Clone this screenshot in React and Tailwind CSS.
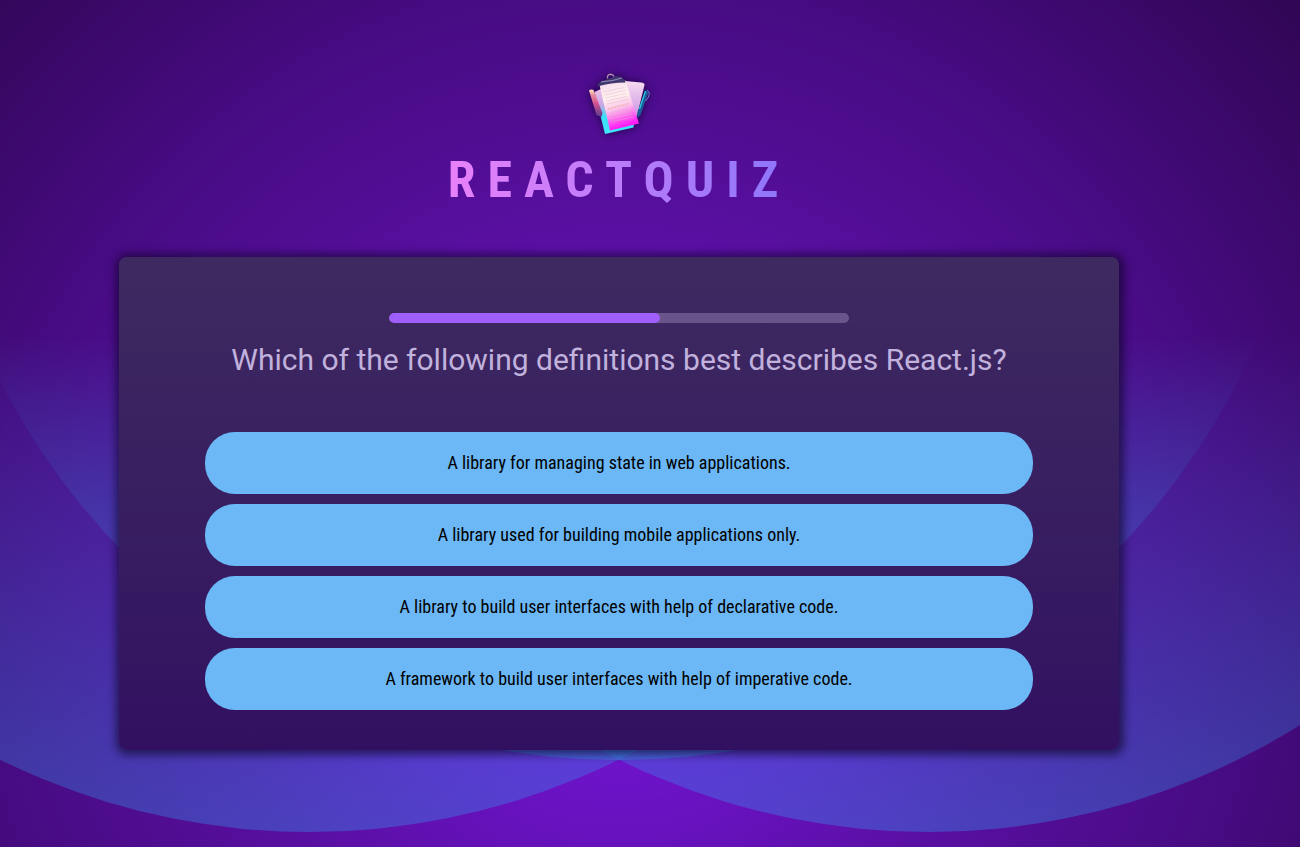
const answers = [
  'A library for managing state in web applications.',
  'A library used for building mobile applications only.',
  'A library to build user interfaces with help of declarative code.',
  'A framework to build user interfaces with help of imperative code.',
];

function Backdrop() {
  return (
    <svg className="absolute inset-0 -z-10 h-full w-full" viewBox="0 0 1300 847" preserveAspectRatio="none" aria-hidden="true">
      <defs>
        <radialGradient id="glow" gradientUnits="userSpaceOnUse" cx="619" cy="615" r="910">
          <stop offset="0" stopColor="#7a15e4" />
          <stop offset="0.43" stopColor="#580fa0" />
          <stop offset="0.7" stopColor="#460b81" />
          <stop offset="1" stopColor="#310655" />
        </radialGradient>
        <linearGradient id="orb" gradientUnits="userSpaceOnUse" x1="0" y1="335" x2="0" y2="760">
          <stop offset="0" stopColor="#2ea0e8" stopOpacity="0" />
          <stop offset="1" stopColor="#2ea0e8" stopOpacity="0.38" />
        </linearGradient>
        <linearGradient id="sideOrb" gradientUnits="userSpaceOnUse" x1="0" y1="335" x2="0" y2="832">
          <stop offset="0" stopColor="#329cf2" stopOpacity="0" />
          <stop offset="1" stopColor="#329cf2" stopOpacity="0.35" />
        </linearGradient>
      </defs>
      <rect width="1300" height="847" fill="url(#glow)" />
      <circle cx="309.5" cy="134" r="698" fill="url(#sideOrb)" />
      <circle cx="928.5" cy="134" r="698" fill="url(#sideOrb)" />
      <circle cx="619" cy="65" r="695" fill="url(#orb)" />
    </svg>
  );
}

function QuizLogo() {
  return (
    <svg className="h-16 w-16 drop-shadow-[0_0_4px_rgba(10,0,40,0.75)]" viewBox="0 0 64 64" aria-hidden="true">
      <defs>
        <linearGradient id="page" x1="0" y1="0" x2="0.25" y2="1">
          <stop offset="0" stopColor="#f3d9ee" />
          <stop offset="0.4" stopColor="#fff0ee" />
          <stop offset="0.62" stopColor="#fcc6ea" />
          <stop offset="0.85" stopColor="#ff5cf0" />
          <stop offset="1" stopColor="#ff1cf5" />
        </linearGradient>
        <linearGradient id="rear" x1="0" y1="0" x2="0" y2="1">
          <stop offset="0" stopColor="#f8dcf0" />
          <stop offset="1" stopColor="#c58be4" />
        </linearGradient>
        <linearGradient id="board" x1="0" y1="0" x2="0" y2="1">
          <stop offset="0" stopColor="#eebfe8" />
          <stop offset="0.35" stopColor="#c9a6e6" />
          <stop offset="0.6" stopColor="#3ee0f5" />
          <stop offset="1" stopColor="#3ee8fa" />
        </linearGradient>
        <linearGradient id="pencil" x1="0" y1="0" x2="0" y2="1">
          <stop offset="0" stopColor="#ffe0c0" />
          <stop offset="0.2" stopColor="#e88a9c" />
          <stop offset="0.5" stopColor="#d4548f" />
          <stop offset="1" stopColor="#593b91" />
        </linearGradient>
      </defs>
      <path d="M38 9 L54 10.5 Q58 11 57.5 13 L50 44 L40 48Z" fill="url(#rear)" />
      <path d="M7.5 20 L14 17 L47 50 L46.5 55.5 L18 62Z" fill="url(#board)" />
      <path d="M2 18.5 Q4 17 6.5 18 L15.5 41 L14.5 45 L9.5 43Z" fill="url(#pencil)" />
      <path d="M58.5 18.5 L61.5 20 L53.5 43 L50.5 46 L50.5 40Z" fill="#1d5c9c" />
      <path d="M58.5 19 L52.5 37" stroke="#28cadd" strokeWidth="1.3" fill="none" />
      <path d="M60 18 Q63.5 20 61.5 25 L58.5 29" stroke="#6f86cf" strokeWidth="1" fill="none" />
      <path d="M12.5 13 L38.5 8.5 L52 51.5 L23 58.5Z" fill="url(#page)" />
      <g stroke="#d8b3c6" strokeWidth="0.7" opacity="0.6">
        <path d="M17 20 L37 15.5 M17.7 23 L38 18.5 M18.5 26 L39 21.5 M19.2 29 L40 24.5 M20 32 L41 27.5 M22 41 L43.5 36 M22.7 44 L44.3 39 M23.5 47 L45 42 M24.3 50 L46 45" />
      </g>
      <path d="M21 37 L42 31.5" stroke="#f2b3b0" strokeWidth="1.6" strokeDasharray="2 1" />
      <path d="M10.5 14.5 Q10.5 11 14 9.5 L28 4.5 Q33 3.5 36 6.5 Q38.5 8 38.5 10.5 Q24 10.5 10.5 14.5Z" fill="#40376f" />
      <path d="M14 9.8 Q25 9.5 35 6" stroke="#8d86b4" strokeWidth="1.2" fill="none" />
      <path d="M20.5 6.5 Q20 2.4 23.5 2.2 Q26 2.2 27 4.6" stroke="#b18aae" strokeWidth="1.4" fill="none" />
    </svg>
  );
}

export default function App() {
  return (
    <div className="relative isolate h-[847px] w-full overflow-hidden bg-[#3c0a70] font-['Roboto_Condensed',Roboto,sans-serif]">
      <Backdrop />
      <div className="flex w-[1238px] flex-col items-center pt-[72px]">
        <header className="flex flex-col items-center">
          <QuizLogo />
          <h1 className="mt-[14px] bg-[linear-gradient(90deg,#e781fa_2%,#8e76fa_98%)] bg-clip-text text-[50px] leading-[60px] font-bold tracking-[12px] text-transparent">
            REACTQUIZ
          </h1>
        </header>
        <main className="mt-[47px] flex h-[492.5px] w-[1000px] flex-col items-center rounded-lg bg-linear-to-b from-[#3e2a60] to-[#321061] pt-14 shadow-[1px_1px_8px_4px_rgba(12,5,32,0.6)]">
          <div className="h-2.5 w-[460px] overflow-hidden rounded-[5px] bg-[#6a558a]">
            <div className="h-full w-[271px] rounded-[5px] bg-[#a05ffa]" />
          </div>
          <h2 className="mt-[19px] font-[Roboto,sans-serif] text-[30px] leading-[36px] font-normal text-[#c1b2dd]">
            Which of the following definitions best describes React.js?
          </h2>
          <ul className="mt-[54px] flex w-[828px] flex-col gap-2.5">
            {answers.map((answer) => (
              <li key={answer}>
                <button className="block h-[62px] w-full rounded-[30px] bg-[#6cb7f5] pb-0.5 text-[18px] text-black">{answer}</button>
              </li>
            ))}
          </ul>
        </main>
      </div>
    </div>
  );
}
